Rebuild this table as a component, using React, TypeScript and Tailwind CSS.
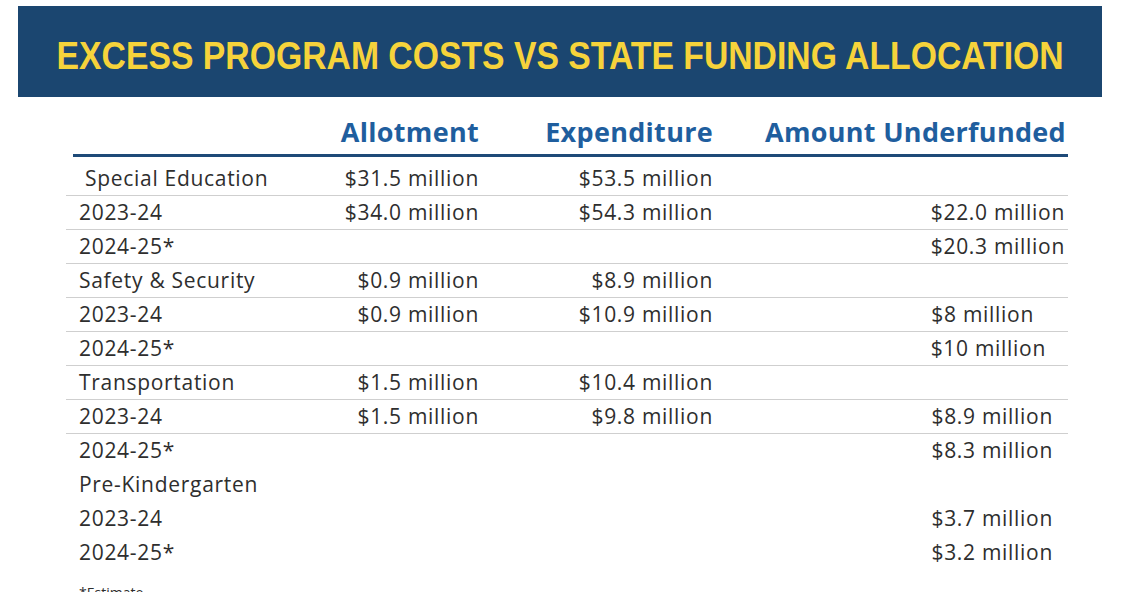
import React from "react";

interface Row {
  label: string;
  allotment?: string;
  expenditure?: string;
  underfunded?: string;
  indent?: boolean;
  underPad?: string;
  line: boolean;
}

const rows: Row[] = [
  { label: "Special Education", allotment: "$31.5 million", expenditure: "$53.5 million", indent: true, line: true },
  { label: "2023-24", allotment: "$34.0 million", expenditure: "$54.3 million", underfunded: "$22.0 million", underPad: "pr-[3px]", line: true },
  { label: "2024-25*", underfunded: "$20.3 million", underPad: "pr-[3px]", line: true },
  { label: "Safety & Security", allotment: "$0.9 million", expenditure: "$8.9 million", line: true },
  { label: "2023-24", allotment: "$0.9 million", expenditure: "$10.9 million", underfunded: "$8 million", underPad: "pr-[34px]", line: true },
  { label: "2024-25*", underfunded: "$10 million", underPad: "pr-[22px]", line: true },
  { label: "Transportation", allotment: "$1.5 million", expenditure: "$10.4 million", line: true },
  { label: "2023-24", allotment: "$1.5 million", expenditure: "$9.8 million", underfunded: "$8.9 million", underPad: "pr-[15px]", line: true },
  { label: "2024-25*", underfunded: "$8.3 million", underPad: "pr-[15px]", line: false },
  { label: "Pre-Kindergarten", line: false },
  { label: "2023-24", underfunded: "$3.7 million", underPad: "pr-[15px]", line: false },
  { label: "2024-25*", underfunded: "$3.2 million", underPad: "pr-[15px]", line: false },
];

const body = { fontFamily: "'Open Sans', Lato, sans-serif" };

export default function App() {
  return (
    <div className="w-[1142px] h-[592px] overflow-hidden bg-white">
      <div className="ml-[18px] mt-[6px] w-[1084px] h-[91px] bg-[#1b4670] flex items-center justify-center pt-[8px]">
        <h1
          className="text-[39px] leading-[44px] font-bold text-[#f6d33b] whitespace-nowrap scale-x-[0.865]"
          style={{ fontFamily: "'Liberation Sans', Arial, sans-serif" }}
        >
          EXCESS PROGRAM COSTS VS STATE FUNDING ALLOCATION
        </h1>
      </div>

      <div className="ml-[66px] w-[1002px]" style={body}>
        <div className="ml-[7px] h-[60px] border-b-[3px] border-[#1e4a78] grid grid-cols-[259px_147px_234px_355px] items-end pb-[2px] text-[27px] tracking-[0.3px] font-bold text-[#1f5e9e]">
          <div />
          <div className="text-right">Allotment</div>
          <div className="text-right">Expenditure</div>
          <div className="text-right pr-[2px]">Amount Underfunded</div>
        </div>
        <div className="h-[5px]" />
        {rows.map((r, i) => (
          <div
            key={i}
            className={`grid grid-cols-[266px_147px_234px_355px] h-[34px] items-center text-[21px] tracking-[0.7px] text-[#2e2e2e] ${r.line ? "border-b border-[#cfcfcf]" : ""}`}
          >
            <div className={r.indent ? "pl-[19px]" : "pl-[13px]"}>{r.label}</div>
            <div className="text-right">{r.allotment}</div>
            <div className="text-right">{r.expenditure}</div>
            <div className={`text-right ${r.underPad ?? ""}`}>{r.underfunded}</div>
          </div>
        ))}
        <div className="pl-[13px] mt-[13px] text-[14px] leading-[20px] text-[#2e2e2e]">*Estimate</div>
      </div>
    </div>
  );
}
